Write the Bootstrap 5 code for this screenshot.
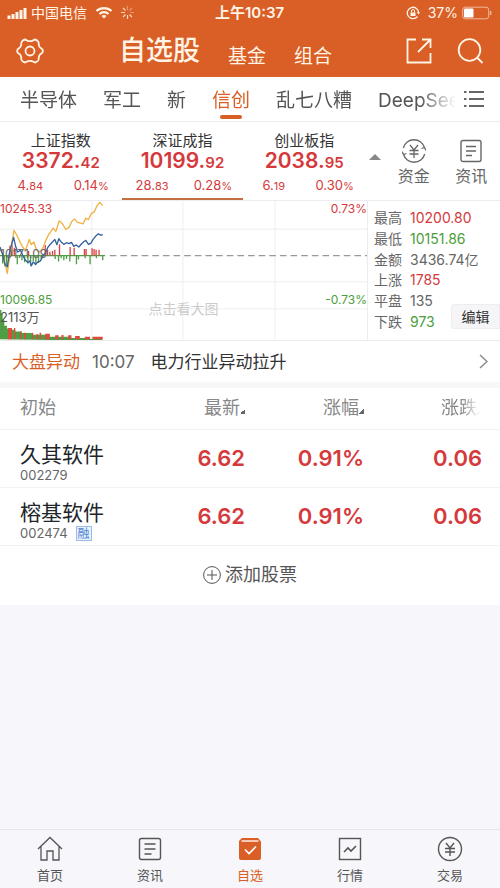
<!DOCTYPE html>
<html lang="zh-CN">
<head>
<meta charset="utf-8">
<meta name="viewport" content="width=device-width, initial-scale=1">
<title>自选股</title>
<link href="https://cdn.jsdelivr.net/npm/bootstrap@5.3.0/dist/css/bootstrap.min.css" rel="stylesheet">
<style>
:root{--brand:#d95f26;--up:#d5393b;--down:#4b9e3b;--ink:#333;--soft:#666;--line:#ececee}
body{font-family:Inter,"Noto Sans CJK SC",sans-serif;background:#f7f7fb;color:var(--ink);font-size:14px;line-height:20px}
a,button{color:inherit;text-decoration:none}
button{background:none;border:0;padding:0}
svg{display:block;flex:none;fill:none;stroke:currentColor}
.c-brand{color:var(--brand)}.c-up{color:var(--up)}.c-down{color:var(--down)}.c-soft{color:var(--soft)}
.topbar{background:var(--brand);color:#fff4e6}
.status{height:25px;padding:0 8px 0 7px}
.status>div{flex:1 1 0}
.clock{font-weight:600;font-size:15px}
.titlebar{height:52px;padding:0 16px}
.side-start{flex:0 0 22%}
.title-main{font-size:27px;line-height:36px;font-weight:500}
.title-sub{font-size:19px;line-height:24px}
.groups{height:45px;border-bottom:1px solid var(--line)}
.groups-scroll{font-size:19px;line-height:48px;gap:26px;padding-left:20px;color:#555;white-space:nowrap;-webkit-mask-image:linear-gradient(90deg,#000 92%,transparent);mask-image:linear-gradient(90deg,#000 92%,transparent)}
.is-on{color:var(--brand)}
.is-on::after{content:"";position:absolute;left:8px;right:8px;top:38px;height:4px;border-radius:2px;background:var(--brand)}
.indices{height:78px}
.quotes{flex:0 0 73%}
.quote{padding-top:10px;border-bottom:2px solid transparent}
.quote.picked{border-color:#c46f3f}
.q-name{font-size:15px;line-height:18px}
.q-val{font-size:21px;line-height:22px;font-weight:600;color:var(--up)}
.q-val small{font-size:15px}
.q-sub{font-size:13px;line-height:22px;color:var(--up)}
.q-sub small{font-size:11px}
.tool{font-size:16px;line-height:20px;color:var(--soft);padding-top:17px;gap:3px}
.market{height:141px;border-top:1px solid var(--line);border-bottom:1px solid var(--line)}
.chart{flex:0 0 73.6%;border-right:1px solid var(--line);font-size:12px;line-height:14px}
.chart svg{width:100%;height:100%}
.chart span{position:absolute}
.l-top{left:0;top:1px}.l-mid{left:0;top:46px;color:#666}.l-bot{left:0;top:92px}.l-vol{left:0;top:109px;color:#555;font-size:13px}
.r-top{right:0;top:1px}.r-bot{right:0;top:92px}
.hint{left:0;right:0;top:101px;font-size:14px;text-align:center;color:#ccc}
.facts{padding:7px 0 8px 6px}
.facts div{gap:8px}
.edit{position:absolute;right:0;bottom:11px;height:25px;width:49px;background:#f5f5f8;border:1px solid #ededf0;border-radius:3px 0 0 3px;color:#333}
.news{height:41px;padding:0 12px;font-size:17px}
.band{height:6px;background:#f7f7f7}
.stocks{table-layout:fixed;--bs-table-bg:#fff}
.stocks>:not(caption)>*>*{padding:0;vertical-align:middle;border-color:#f2f2f2}
.stocks th:first-child{padding-left:20px}
.stocks thead th{height:41px;font-size:18px;font-weight:400;color:#888;white-space:nowrap}
.c-name{width:28%}.c-last{width:21%}.c-rate{width:23.8%}.c-diff{width:23.6%}
.sort{display:inline-block;width:5px;height:5px;background:linear-gradient(135deg,transparent 50%,#666 50%)}
.fading{-webkit-mask-image:linear-gradient(90deg,#000 50%,transparent 95%);mask-image:linear-gradient(90deg,#000 50%,transparent 95%)}
.stocks tbody td,.stocks tbody th{height:58px}
.stocks>tbody>tr>th{padding-top:10px}
.s-name{font-size:21px;line-height:24px;font-weight:400}
.s-code{font-size:13px;line-height:16px;font-weight:400;color:var(--soft)}
.stocks .s-val{font-size:22px;font-weight:600;color:var(--up)}
.tag{font-size:12px;line-height:13px;border:1px solid #9dbbe6;background:#eaf2fd;color:#4f86d0;padding:0 1px}
.add{height:59px;font-size:18px;color:#555}
.dock{height:59px;border-top:1px solid #e6e6ea;color:#555;font-size:13px;line-height:18px}
.dock a{gap:4px;padding-top:6px}
</style>
<script src="https://cdn.jsdelivr.net/npm/bootstrap@5.3.0/dist/js/bootstrap.bundle.min.js"></script>
</head>
<body>
<div class="d-flex flex-column min-vh-100">
<header class="topbar">
  <div class="status d-flex align-items-center">
    <div class="d-flex align-items-center">
      <svg width="20" height="12" viewBox="0 0 20 12"><path d="M2 8.500V12M6 7V12M10 5V12M14 3V12M18 1V12" stroke-width="3"/></svg>
      <span class="ms-1">中国电信</span>
      <svg class="ms-2" width="18" height="13" viewBox="0 0 18 13"><path d="M1.500 5a11 11 0 0 1 15 0M4.500 8a6.500 6.500 0 0 1 9 0" stroke-width="2.200"/><path d="M6.500 10a4 4 0 0 1 5 0L9 12.500z" fill="currentColor" stroke="none"/></svg>
      <svg class="ms-2" width="13" height="13" viewBox="0 0 13 13" stroke-width="1.200"><path d="M6.500 0v4M11 2 8.500 4.500M13 6.500H9" opacity=".4"/><path d="M11 11 8.500 8.500M6.500 13V9M2 11l2.500-2.500M0 6.500h4M2 2l2.500 2.500" opacity=".8"/></svg>
    </div>
    <span class="clock">上午10:37</span>
    <div class="d-flex align-items-center justify-content-end">
      <svg width="14" height="14" viewBox="0 0 14 14"><path d="M11.500 10.500A5.700 5.700 0 1 1 12.700 7" stroke-width="1.300"/><path d="M10.800 6.200h3.200L12.500 8.500z" fill="currentColor" stroke="none"/><path d="M4.500 6.500h5v3.500h-5z" fill="currentColor" stroke="none"/><path d="M5.500 6.500V5a1.500 1.500 0 0 1 3 0v1.500"/></svg>
      <span class="ms-2 me-1">37%</span>
      <svg width="30" height="14" viewBox="0 0 30 14"><rect x=".7" y="1.200" width="26" height="11.600" rx="2.500" opacity=".6"/><rect x="2" y="2.500" width="9.500" height="9" rx="1" fill="#fff" stroke="none"/><path d="M28.600 5v4" stroke-width="1.500" opacity=".6"/></svg>
    </div>
  </div>
  <div class="titlebar d-flex align-items-center">
    <div class="side-start d-flex"><button aria-label="设置"><svg width="28" height="26" viewBox="0 0 28 26" stroke-width="1.800" stroke-linejoin="round"><path d="M9 1.500c1.500 0 2 1.700 5 1.700s3.500-1.700 5-1.700c1.300.3 2.800 1.400 3.400 2.400.7 1.400-.3 2.400 1 4.700 1 1.800 3 2 3.300 3.300v2.200c-.3 1.300-2.300 1.500-3.300 3.300-1.300 2.300-.3 3.300-1 4.700-.6 1-2.100 2.100-3.400 2.400-1.500 0-2-1.700-5-1.700s-3.500 1.700-5 1.700c-1.300-.3-2.800-1.400-3.400-2.400-.7-1.400.3-2.400-1-4.700-1-1.800-3-2-3.300-3.300v-2.200C1.600 10.600 3.600 10.400 4.600 8.600c1.300-2.300.3-3.300 1-4.700C6.200 2.900 7.700 1.800 9 1.500z"/><circle cx="14" cy="13" r="4.500"/></svg></button></div>
    <nav class="d-flex align-items-end">
      <a class="title-main" href="#">自选股</a>
      <a class="title-sub ms-4 ps-1" href="#">基金</a>
      <a class="title-sub ms-4 ps-1" href="#">组合</a>
    </nav>
    <div class="ms-auto d-flex gap-4">
      <button aria-label="分享"><svg width="27" height="26" viewBox="0 0 27 26" stroke-width="1.800"><path d="M10 1.500H1.500v23h23V15M16 1.500h8.500V10M24 2 12 14"/></svg></button>
      <button aria-label="搜索"><svg width="27" height="26" viewBox="0 0 27 26" stroke-width="1.800"><circle cx="12.500" cy="12" r="10.800"/><path d="m20 19.500 5.500 5.500"/></svg></button>
    </div>
  </div>
</header>

<main class="bg-white">
  <div class="groups d-flex">
    <nav class="groups-scroll d-flex flex-fill overflow-hidden">
      <a href="#">半导体</a><a href="#">军工</a><a href="#">新</a><a class="is-on position-relative" href="#">信创</a><a href="#">乱七八糟</a><a href="#">DeepSeek</a>
    </nav>
    <button class="c-soft ps-2 pe-3" aria-label="全部分组"><svg width="20" height="18" viewBox="0 0 20 18" stroke-width="1.800"><path d="M0 2h2.500M5 2h15M0 9h2.500M5 9h15M0 16h2.500M5 16h15"/></svg></button>
  </div>

  <div class="indices d-flex">
    <div class="quotes d-flex text-center">
      <a class="quote col-4" href="#"><div class="q-name">上证指数</div><div class="q-val">3372.<small>42</small></div><div class="q-sub row g-0"><span class="col-6">4.<small>84</small></span><span class="col-6">0.14<small>%</small></span></div></a>
      <a class="quote picked col-4" href="#"><div class="q-name">深证成指</div><div class="q-val">10199.<small>92</small></div><div class="q-sub row g-0"><span class="col-6">28.<small>83</small></span><span class="col-6">0.28<small>%</small></span></div></a>
      <a class="quote col-4" href="#"><div class="q-name">创业板指</div><div class="q-val">2038.<small>95</small></div><div class="q-sub row g-0"><span class="col-6">6.<small>19</small></span><span class="col-6">0.30<small>%</small></span></div></a>
    </div>
    <button class="px-1 pb-2" aria-label="收起"><svg width="12" height="6" viewBox="0 0 12 6"><path d="M0 6 6 0l6 6z" fill="#888" stroke="none"/></svg></button>
    <div class="d-flex flex-fill">
      <a class="tool col-6 d-flex flex-column align-items-center" href="#"><svg width="24" height="24" viewBox="0 0 24 24" stroke-width="1.300"><path d="M1.300 9A11 11 0 0 1 22.600 9M22.700 15A11 11 0 0 1 1.400 15M0 12.500l1.500 3 3-1M24 11.500l-1.500-3-3 1"/><path d="m8 6 4 5 4-5M12 11v8M7.500 11.500h9M7.500 15h9"/></svg>资金</a>
      <a class="tool col-6 d-flex flex-column align-items-center" href="#"><svg width="22" height="24" viewBox="0 0 22 24" stroke-width="1.400"><rect x="1" y="1.500" width="20" height="21" rx="2"/><path d="M6 7.500h10M6 12h10M6 16.500h6"/></svg>资讯</a>
    </div>
  </div>

  <section class="market d-flex position-relative">
    <div class="chart position-relative">
      <svg viewBox="0 6 1104 420" preserveAspectRatio="none" stroke-width="4" stroke-linejoin="round">
        <path stroke="#eee" stroke-width="3" d="M0 91h1104M0 250h1104M0 332h1104M276 6v420M550 6v420M827 6v420"/>
        <path stroke="#999" stroke-dasharray="20 12" d="M330 171h774"/>
        <path stroke="#4f9e45" d="M0 171H316M8 171v24M14 171v32M20 171v28M28 171v16M52 171v26M66 171v14M74 171v20M84 171v24M92 171v30M100 171v16M108 171v24M116 171v22M124 171v12M166 171v10M176 171v18M184 171v8M192 171v14M200 171v10M210 171v18M230 171v26M236 171v12M256 171v8M271 171v26M290 171v8M309 171v14"/>
        <path stroke="#d9423f" d="M30 171v-30M36 171v-36M43 171v-24M86 171v-14M136 171v-32M143 171v-18M150 171v-12M158 171v-14M165 171v-18M179 171v-34M211 171v-26M223 171v-24M254 171v-20M259 171v-20M277 171v-22M283 171v-20M289 171v-18M298 171v-18"/>
        <path stroke="#f0b244" d="m0 150 8 15 6 25 8 35 8-55 6-40 6-35 8 13 8 17 10 20 8 10 6-15 6-18 6 16 8-8 8 25 8 5 10-10 10-25 8-17 6-8 8-12 8 10 10-32 10 9 10 17 10-7 8-17 8-8 8 10 8 2 10 3 8-17 8 4 8-17 10-7 8-18 8-10 9 10"/>
        <path stroke="#35629f" d="M0 145 7 165 14 195 22 205 28 165 34 140 41 116 47 143 53 160 62 155 68 170 76 184 84 192 90 187 94 202 100 190 107 198 114 190 121 188 130 171 137 163 144 146 152 136 158 130 165 122 171 138 177 120 184 130 192 137 200 132 208 135 215 131 222 143 229 139 237 145 245 136 252 129 258 125 266 137 273 134 280 122 288 112 296 105 302 109 309 108"/>
        <g stroke="none"><path fill="#4f9e45" d="M0 424V335h4v12h4v18h5v18h8v8h10v4h15v5h20v5h30v5h50v6h60v4h60v3h42v5z"/>
        <path fill="#dc4b3c" d="M24 424v-34h12v34zM42 424v-34h4v34zM60 424v-24h4v24zM73 424v-20h5v20zM96 424v-20h4v20zM110 424v-16h4v16zM119 424v-20h5v20zM136 424v-17h14v17zM166 424v-12h10v12zM185 424v-13h6v13zM205 424v-12h10v12zM226 424v-10h14v10zM255 424v-8h16v8zM278 424v-8h31v8z"/></g>
      </svg>
      <span class="l-top c-up">10245.33</span><span class="l-mid">10171.09</span><span class="l-bot c-down">10096.85</span><span class="l-vol">2113万</span>
      <span class="r-top c-up">0.73%</span><span class="r-bot c-down">-0.73%</span><span class="hint">点击看大图</span>
    </div>
    <div class="facts d-flex flex-column justify-content-between c-soft">
      <div class="d-flex"><span>最高</span><span class="c-up">10200.80</span></div>
      <div class="d-flex"><span>最低</span><span class="c-down">10151.86</span></div>
      <div class="d-flex"><span>金额</span><span>3436.74亿</span></div>
      <div class="d-flex"><span>上涨</span><span class="c-up">1785</span></div>
      <div class="d-flex"><span>平盘</span><span>135</span></div>
      <div class="d-flex"><span>下跌</span><span class="c-down">973</span></div>
    </div>
    <button class="edit">编辑</button>
  </section>

  <a class="news d-flex align-items-center" href="#">
    <span class="c-brand">大盘异动</span><span class="c-soft ms-2 me-3 ps-1">10:07</span><span>电力行业异动拉升</span>
    <svg class="ms-auto" width="9" height="15" viewBox="0 0 9 15"><path d="m1 1 7 6.500L1 14" stroke="#888" stroke-width="1.400"/></svg>
  </a>
  <div class="band"></div>

  <table class="stocks table mb-0 text-end">
    <colgroup><col class="c-name"><col class="c-last"><col class="c-rate"><col class="c-diff"><col></colgroup>
    <thead><tr><th class="text-start">初始</th><th><button>最新<i class="sort"></i></button></th><th><button>涨幅<i class="sort"></i></button></th><th><button class="fading">涨跌<i class="sort"></i></button></th><td></td></tr></thead>
    <tbody>
      <tr><th class="text-start"><div class="s-name">久其软件</div><div class="s-code">002279</div></th><td class="s-val">6.62</td><td class="s-val">0.91%</td><td class="s-val">0.06</td><td></td></tr>
      <tr><th class="text-start"><div class="s-name">榕基软件</div><div class="s-code d-flex align-items-center gap-2">002474 <span class="tag">融</span></div></th><td class="s-val">6.62</td><td class="s-val">0.91%</td><td class="s-val">0.06</td><td></td></tr>
    </tbody>
  </table>
  <button class="add w-100 d-flex align-items-center justify-content-center"><svg class="me-1" width="18" height="18" viewBox="0 0 18 18"><circle cx="9" cy="9" r="8.400"/><path d="M9 4v10M4 9h10"/></svg>添加股票</button>
</main>

<nav class="dock d-flex mt-auto">
  <a class="col d-flex flex-column align-items-center" href="#"><svg width="26" height="26" viewBox="0 0 26 26" stroke-width="1.300"><path d="M1 13 13 1.500 25 13M4 10.500V24h6v-9h6v9h6V10.500"/></svg>首页</a>
  <a class="col d-flex flex-column align-items-center" href="#"><svg width="26" height="26" viewBox="0 0 26 26" stroke-width="1.400"><rect x="2.500" y="2.500" width="21" height="21" rx="2"/><path d="M7.500 8h11M7.500 13h11M7.500 18h7"/></svg>资讯</a>
  <a class="col c-brand d-flex flex-column align-items-center" href="#"><svg width="26" height="26" viewBox="0 0 26 26"><path d="M5 2h16l3 3.500V22a2 2 0 0 1-2 2H4a2 2 0 0 1-2-2V5z" fill="currentColor" stroke="none"/><path d="M4.500 5h17" stroke="#fbe3d6" stroke-width="1.600"/><path d="m8 13.500 4 4 7-7" stroke="#fff" stroke-width="1.600"/></svg>自选</a>
  <a class="col d-flex flex-column align-items-center" href="#"><svg width="26" height="26" viewBox="0 0 26 26" stroke-width="1.400"><rect x="2.500" y="2.500" width="21" height="21"/><path d="m7 16 4-4 3 3 5-5" stroke-width="1.600"/></svg>行情</a>
  <a class="col d-flex flex-column align-items-center" href="#"><svg width="26" height="26" viewBox="0 0 26 26" stroke-width="1.400"><circle cx="13" cy="13" r="11.500"/><path d="m9 7 4 5 4-5M13 12v8M8 12.500h10M8 16h10"/></svg>交易</a>
</nav>
</div>
</body>
</html>
